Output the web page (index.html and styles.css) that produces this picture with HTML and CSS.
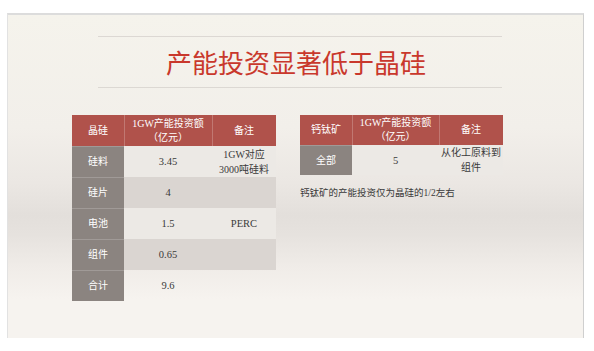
FILE: index.html
```html
<!DOCTYPE html>
<html lang="zh">
<head>
<meta charset="utf-8">
<link rel="stylesheet" href="styles.css">
</head>
<body>
<div class="slide">
  <div class="title-block">
    <h1 class="title">产能投资显著低于晶硅</h1>
  </div>
  <div class="tables">
    <div class="grid grid-left">
      <div class="cell head">晶硅</div>
      <div class="cell head sep">1GW产能投资额<br>（亿元）</div>
      <div class="cell head sep">备注</div>

      <div class="cell side">硅料</div>
      <div class="cell light num">3.45</div>
      <div class="cell light">1GW对应<br>3000吨硅料</div>

      <div class="cell side">硅片</div>
      <div class="cell dark num">4</div>
      <div class="cell dark"></div>

      <div class="cell side">电池</div>
      <div class="cell light num">1.5</div>
      <div class="cell light num">PERC</div>

      <div class="cell side">组件</div>
      <div class="cell dark num">0.65</div>
      <div class="cell dark"></div>

      <div class="cell side">合计</div>
      <div class="cell num">9.6</div>
      <div class="cell"></div>
    </div>

    <div class="right-col">
      <div class="grid grid-right">
        <div class="cell head">钙钛矿</div>
        <div class="cell head sep">1GW产能投资额<br>（亿元）</div>
        <div class="cell head sep">备注</div>

        <div class="cell side">全部</div>
        <div class="cell light num">5</div>
        <div class="cell light">从化工原料到<br>组件</div>
      </div>
      <p class="note">钙钛矿的产能投资仅为晶硅的1/2左右</p>
    </div>
  </div>
</div>
</body>
</html>
```

FILE: styles.css
```css
html, body {
  margin: 0;
  padding: 0;
  background: #ffffff;
}

body {
  font-family: "Liberation Serif", "Noto Sans CJK SC", serif;
  color: #3a3a3a;
}

.slide {
  box-sizing: border-box;
  width: 577px;
  height: 325px;
  margin: 13px 0 0 7px;
  border-top: 2px solid #dcdcdc;
  border-left: 1px solid #e2e2e2;
  border-right: 1px solid #cfcfcf;
  background: linear-gradient(to bottom,
    #f5f3ec 0%,
    #f2efea 35%,
    #ebe7e3 52%,
    #e3dfdb 62%,
    #e6e2de 68%,
    #f0ece8 78%,
    #f6f3ef 88%,
    #f6f3ef 100%);
  overflow: hidden;
}

.title-block {
  margin: 21px 0 0 90px;
  width: 404px;
  height: 50px;
  border-top: 1px solid #dcd8d3;
  border-bottom: 1px solid #dcd8d3;
  display: flex;
  align-items: center;
  justify-content: center;
}

.title {
  margin: 0 0 0 -8px;
  font-family: "Noto Sans CJK SC", sans-serif;
  font-weight: 400;
  font-size: 26px;
  line-height: 30px;
  color: #c9382c;
}

.tables {
  display: flex;
  align-items: flex-start;
  gap: 24px;
  margin: 27px 0 0 64px;
}

.grid {
  display: grid;
  gap: 0;
  font-size: 10px;
}

.grid-left {
  grid-template-columns: 52px 88px 64px;
  grid-auto-rows: 31px;
}

.grid-right {
  grid-template-columns: 52px 87px 64px;
  grid-template-rows: 30px 30px;
}

.cell {
  display: flex;
  align-items: center;
  justify-content: center;
  text-align: center;
  line-height: 15px;
  color: #3a3a3a;
}

.head {
  background: #b0524b;
  color: #ffffff;
  line-height: 14px;
}

.head.sep {
  box-shadow: inset 1px 0 0 rgba(255, 255, 255, 0.22);
}

.side {
  background: #8b8480;
  color: #ffffff;
  box-shadow: inset 0 1px 0 rgba(255, 255, 255, 0.18);
}

.light {
  background: #ece9e5;
}

.dark {
  background: #dad5d1;
}

.num {
  font-size: 10.5px;
}

.right-col {
  display: flex;
  flex-direction: column;
}

.note {
  margin: 12px 0 0 0;
  font-size: 9.5px;
  line-height: 12px;
  color: #3a3a3a;
}
```
